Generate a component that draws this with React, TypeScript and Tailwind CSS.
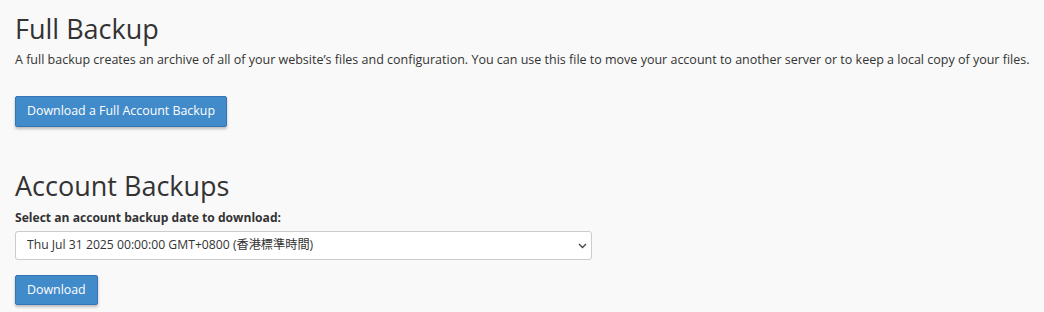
import React from 'react';

function App() {
  return (
    <div className="min-h-screen bg-[#f9f9f9] text-[#333] px-[15px] pt-[14px] font-['Open_Sans',sans-serif]">
      <h2 className="text-[27px] leading-[30px] font-normal">Full Backup</h2>
      <p className="text-[12.5px] leading-[18px] mt-[7px] whitespace-nowrap">
        A full backup creates an archive of all of your website’s files and configuration. You can use this file to move your account to another server or to keep a local copy of your files.
      </p>
      <button className="mt-[27px] bg-[#428bca] text-white text-[12.4px] h-[31px] px-[11px] rounded-[2px] border border-[#3575b5] shadow-[0_2px_3px_rgba(0,0,0,0.25)]">
        Download a Full Account Backup
      </button>

      <h2 className="text-[27px] leading-[30px] font-normal mt-[44px]">Account Backups</h2>
      <label className="block text-[12.1px] font-bold leading-[18px] mt-[8px]">Select an account backup date to download:</label>
      <div className="relative mt-[4px] w-[577px]">
        <select className="appearance-none block w-full h-[29px] bg-white border border-[#ccc] rounded-[3px] text-[12.2px] text-[#333] pl-[11px] pr-[24px] font-['Open_Sans','Noto_Sans_CJK_TC',sans-serif]">
          <option>Thu Jul 31 2025 00:00:00 GMT+0800 (香港標準時間)</option>
        </select>
        <svg className="absolute right-[5px] top-[12px] pointer-events-none" width="9" height="6" viewBox="0 0 9 6" fill="none">
          <path d="M1 1l3.5 3.5L8 1" stroke="#444" strokeWidth="1.3" />
        </svg>
      </div>
      <button className="mt-[15px] bg-[#428bca] text-white text-[12.4px] h-[30px] px-[11px] rounded-[2px] border border-[#3575b5] shadow-[0_2px_3px_rgba(0,0,0,0.25)]">
        Download
      </button>
    </div>
  );
}

export default App;
